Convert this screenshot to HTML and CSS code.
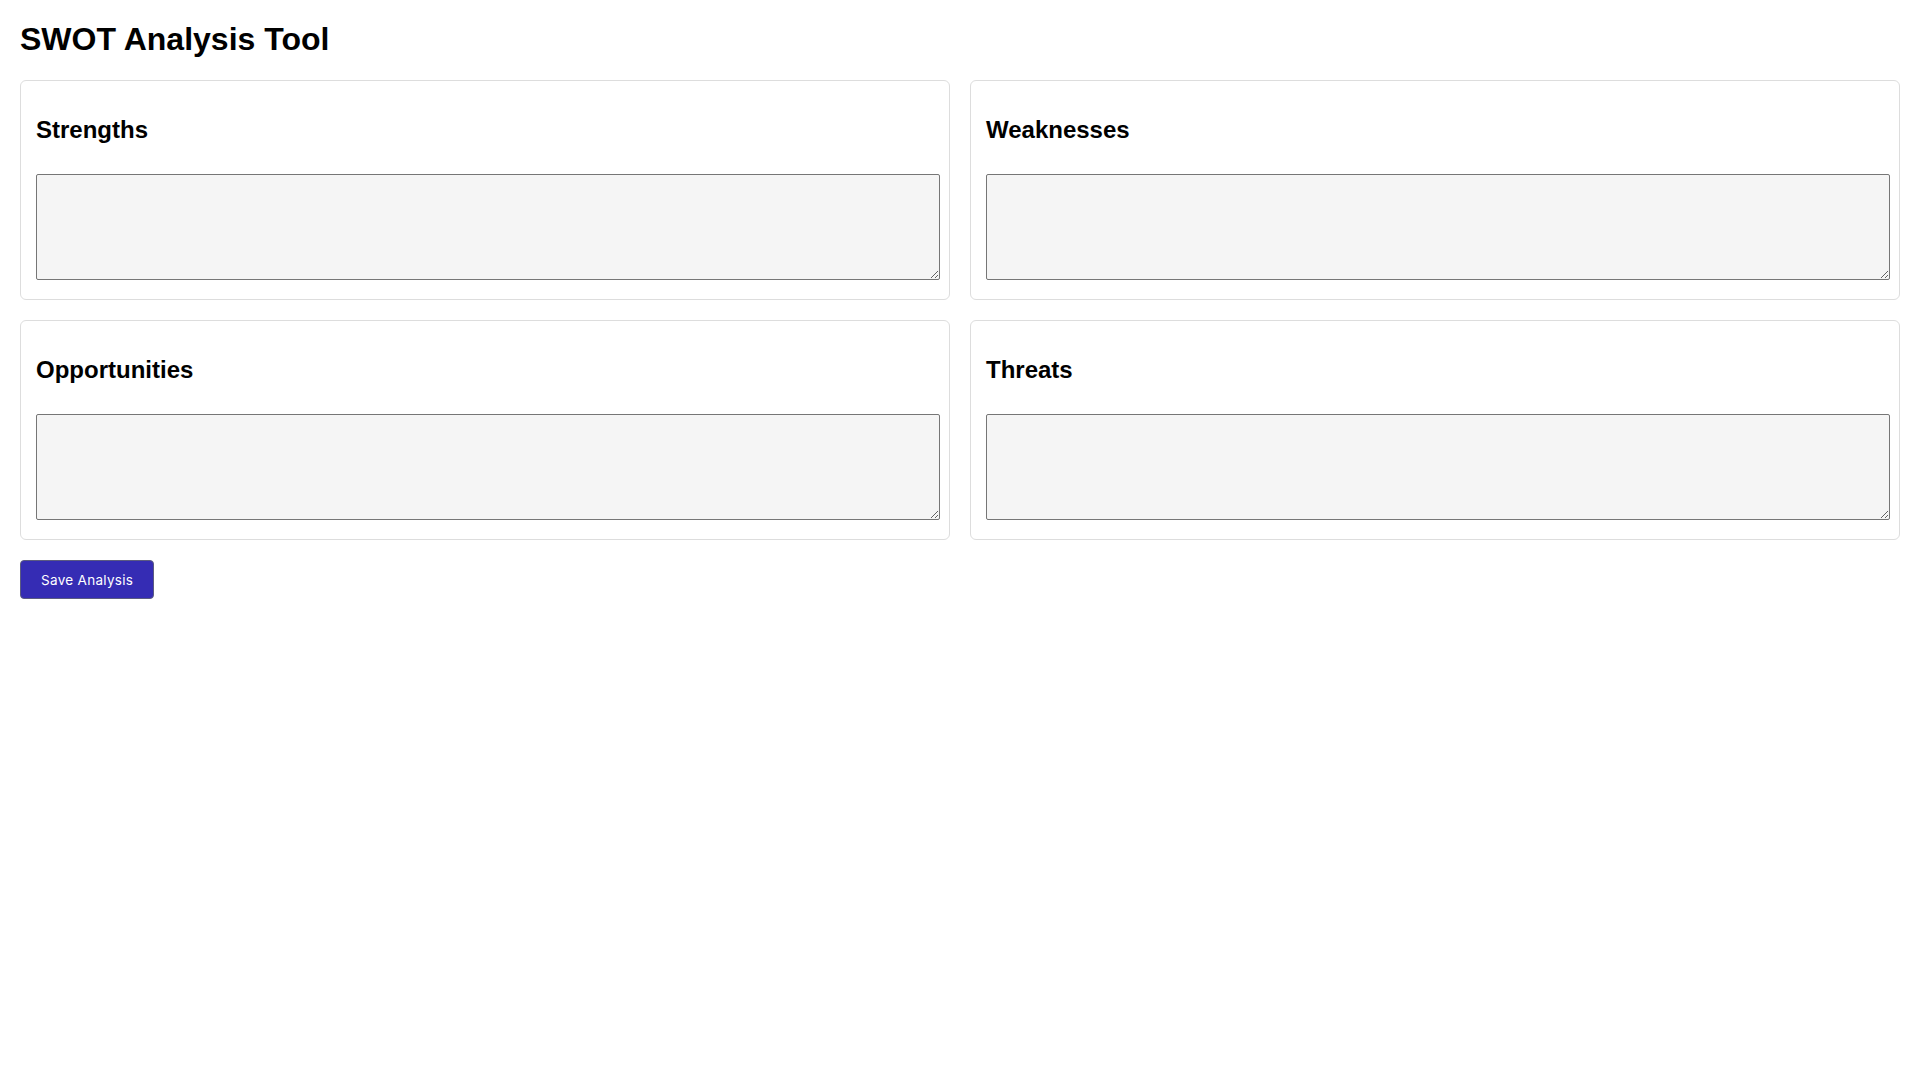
FILE: index.html
```html
<!DOCTYPE html>
<html>
<head>
  <meta charset="UTF-8">
  <meta name="viewport" content="width=device-width, initial-scale=1.0">
  <title>SWOT Analysis Tool</title>
  <link rel="stylesheet" href="styles.css">
</head>
<body>
  <h1>SWOT Analysis Tool</h1>

  <div class="swot-grid">
    <div class="swot-card">
      <h2>Strengths</h2>
      <textarea id="strengths"></textarea>
    </div>
    <div class="swot-card">
      <h2>Weaknesses</h2>
      <textarea id="weaknesses"></textarea>
    </div>
    <div class="swot-card">
      <h2>Opportunities</h2>
      <textarea id="opportunities"></textarea>
    </div>
    <div class="swot-card">
      <h2>Threats</h2>
      <textarea id="threats"></textarea>
    </div>
  </div>

  <button type="button" id="saveButton">Save Analysis</button>
</body>
</html>
```

FILE: styles.css
```css
body {
  font-family: "Liberation Sans", Arial, sans-serif;
  margin: 20px;
  background-color: #fff;
  color: #000;
}
h1 {
  margin: 1px 0 22px;
}
.swot-grid {
  display: grid;
  grid-template-columns: 1fr 1fr;
  gap: 20px;
  margin-bottom: 20px;
}
.swot-card {
  border: 1px solid #ddd;
  border-radius: 6px;
  padding: 15px;
  min-width: 0;
}
.swot-card textarea {
  width: 100%;
  height: 100px;
  margin-top: 10px;
  background-color: #f5f5f5;
  border: 1px solid #767676;
  border-radius: 2px;
  padding: 2px;
}
button {
  font-family: Inter, "Noto Sans", sans-serif;
  font-size: 13.5px;
  letter-spacing: 0.3px;
  background-color: #352cb4;
  color: white;
  border: 1px solid #5b5b80;
  border-radius: 4px;
  padding: 11px 20px 10px;
  cursor: pointer;
}
button:hover {
  background-color: #2c2496;
}
```
